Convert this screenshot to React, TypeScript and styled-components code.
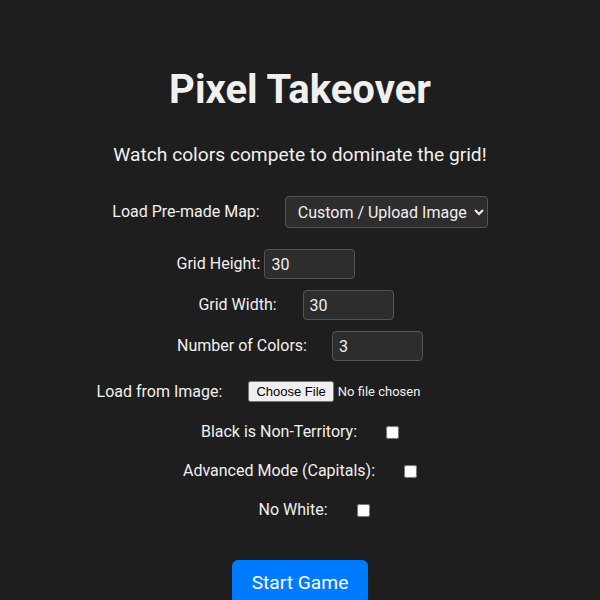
import React from "react";
import styled, { createGlobalStyle } from "styled-components";

const Global = createGlobalStyle`
  html, body {
    margin: 0;
    padding: 0;
    background: #1e1e1e;
  }
  body {
    font-family: Roboto, "Liberation Sans", Arial, sans-serif;
    color: #f0f0f0;
  }
`;

const Page = styled.div`
  display: flex;
  flex-direction: column;
  align-items: center;
  padding-top: 66px;
  min-height: 600px;
  box-sizing: border-box;
`;

const Title = styled.h1`
  margin: 0;
  font-size: 40px;
  font-weight: 700;
  color: #f0f0f0;
  line-height: 48px;
`;

const Subtitle = styled.p`
  margin: 29px 0 0;
  font-size: 19.2px;
  line-height: 24px;
  color: #f0f0f0;
`;

const Row = styled.div<{ $mt: number; $shift?: number }>`
  align-self: stretch;
  display: flex;
  align-items: center;
  justify-content: center;
  margin-top: ${(p) => p.$mt}px;
  padding-right: ${(p) => Math.max(p.$shift ?? 0, 0)}px;
  padding-left: ${(p) => Math.max(-(p.$shift ?? 0), 0)}px;
  font-size: 16px;
`;

const Label = styled.label<{ $gap: number }>`
  margin-right: ${(p) => p.$gap}px;
  line-height: 20px;
`;

const Select = styled.select`
  height: 32px;
  box-sizing: border-box;
  background: #2d2d2d;
  color: #f0f0f0;
  border: 1px solid #555;
  border-radius: 4px;
  padding: 0 4px 0 8px;
  font-family: Roboto, "Liberation Sans", Arial, sans-serif;
  font-size: 16px;
`;

const NumberInput = styled.input`
  width: 91px;
  height: 30px;
  box-sizing: border-box;
  background: #2d2d2d;
  color: #f0f0f0;
  border: 1px solid #555;
  border-radius: 4px;
  padding: 0 6px;
  font-family: Roboto, "Liberation Sans", Arial, sans-serif;
  font-size: 16px;
  outline: none;
`;

const FileInput = styled.input`
  font-family: Roboto, "Liberation Sans", Arial, sans-serif;
  font-size: 13px;
  color: #f0f0f0;
`;

const Check = styled.input`
  margin: 0;
  width: 13px;
  height: 13px;
`;

const StartButton = styled.button`
  margin-top: 40px;
  width: 136px;
  height: 44px;
  flex-shrink: 0;
  background: #007bff;
  color: #ffffff;
  border: none;
  border-radius: 6px;
  font-family: Roboto, "Liberation Sans", Arial, sans-serif;
  font-size: 19.2px;
  cursor: pointer;
`;

export default function App() {
  return (
    <>
      <Global />
      <Page>
        <Title>Pixel Takeover</Title>
        <Subtitle>Watch colors compete to dominate the grid!</Subtitle>
        <Row $mt={29}>
          <Label $gap={25}>Load Pre-made Map:</Label>
          <Select defaultValue="custom">
            <option value="custom">Custom / Upload Image</option>
          </Select>
        </Row>
        <Row $mt={21} $shift={68}>
          <Label $gap={4}>Grid Height:</Label>
          <NumberInput type="number" defaultValue={30} />
        </Row>
        <Row $mt={11} $shift={8}>
          <Label $gap={26}>Grid Width:</Label>
          <NumberInput type="number" defaultValue={30} />
        </Row>
        <Row $mt={11}>
          <Label $gap={25}>Number of Colors:</Label>
          <NumberInput type="number" defaultValue={3} />
        </Row>
        <Row $mt={20} $shift={6}>
          <Label $gap={26}>Load from Image:</Label>
          <FileInput type="file" />
        </Row>
        <Row $mt={20}>
          <Label $gap={29}>Black is Non-Territory:</Label>
          <Check type="checkbox" />
        </Row>
        <Row $mt={19}>
          <Label $gap={29}>Advanced Mode (Capitals):</Label>
          <Check type="checkbox" />
        </Row>
        <Row $mt={19} $shift={-28}>
          <Label $gap={29}>No White:</Label>
          <Check type="checkbox" />
        </Row>
        <StartButton>Start Game</StartButton>
      </Page>
    </>
  );
}
